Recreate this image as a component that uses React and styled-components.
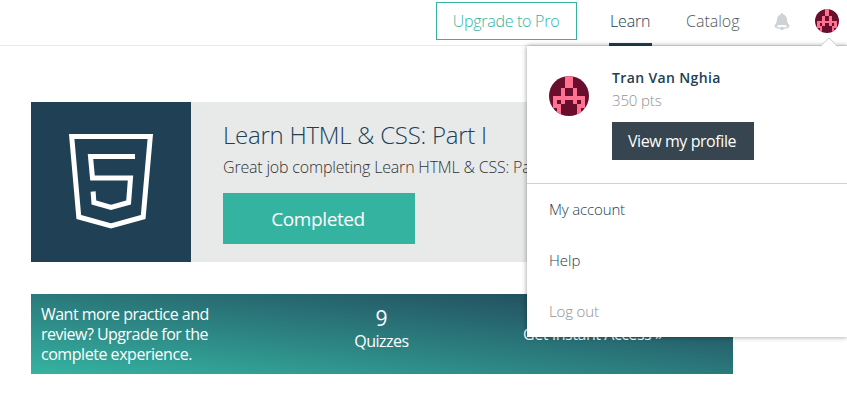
import React from "react";
import styled, { createGlobalStyle } from "styled-components";

const Global = createGlobalStyle`
  * { box-sizing: border-box; }
  body { margin: 0; background: #fff; overflow: hidden; font-family: "Open Sans", "Noto Sans", sans-serif; font-weight: 300; color: #204056; }
`;
const Page = styled.div`position: relative; width: 847px; height: 407px; overflow: hidden; background: #fff;`;
const Header = styled.header`display: flex; align-items: flex-start; height: 46px; padding-left: 436px; border-bottom: 1px solid #e8eaea;`;
const Upgrade = styled.button`width: 141px; height: 38px; margin-top: 2px; padding: 0 1px 0 0; border: 1px solid #35b3a1; background: #fff; color: #35b3a1; font: inherit; font-size: 16px; letter-spacing: -0.27px; white-space: nowrap;`;
const NavLink = styled.a`height: 46px; padding: 0 1px; line-height: 43px; font-size: 16px; white-space: nowrap; color: ${p => p.$active ? "#204056" : "#4f5b63"}; border-bottom: 3px solid ${p => p.$active ? "#204056" : "transparent"}; width: ${p => p.$width}px; margin-left: ${p => p.$gap}px; letter-spacing: ${p => p.$track || 0}px;`;
const Bell = styled.svg`width: 16px; height: 17px; margin: 13px 0 0 32px;`;
const AvatarSvg = styled.svg`display: block; flex: none; width: ${p => p.$size}px; height: ${p => p.$size}px; border-radius: 50%;`;
const HeaderAvatar = styled.div`margin: 9px 0 0 25px;`;

const Main = styled.main`width: 702px; margin: 56px 0 0 31px;`;
const Course = styled.section`display: flex; height: 160px; background: #e8eaea;`;
const Badge = styled.div`width: 160px; height: 160px; background: #204056; flex: none;`;
const CourseBody = styled.div`padding: 16px 0 0 32px; white-space: nowrap;`;
const Title = styled.h1`margin: 0; font-size: 24px; line-height: 34px; font-weight: 300; letter-spacing: -0.25px;`;
const Desc = styled.p`margin: 0; font-size: 16px; line-height: 30px; color: #333; letter-spacing: -0.19px;`;
const Completed = styled.button`display: block; width: 192px; height: 51px; margin-top: 11px; padding: 0 2px 0 0; border: 0; background: #35b3a1; color: #fff; font: 400 19px "Open Sans", sans-serif; letter-spacing: -0.4px;`;
const Promo = styled.section`display: flex; height: 80px; margin-top: 32px; color: #fff; font-weight: 400; font-size: 16px; line-height: 20px; background: linear-gradient(to top right, #35b3a1, #204056);`;
const Pitch = styled.div`width: 234px; padding: 10px 0 0 10px; white-space: nowrap;`;
const Line = styled.div`letter-spacing: ${p => p.$track || 0}px;`;
const Stat = styled.div`width: 233px; padding-top: 13px; text-align: center;`;
const Count = styled.div`font-size: 21px; line-height: 23px; margin-bottom: 1px;`;
const Access = styled.div`width: 235px; padding-top: 30px; padding-left: 25px; white-space: nowrap; letter-spacing: -0.45px;`;

const Menu = styled.aside`position: absolute; left: 527px; top: 46px; width: 320px; height: 291px; background: #fff; box-shadow: 0 0 5px rgba(0,0,0,.42);`;
const Arrow = styled.svg`position: absolute; left: 293px; top: -9px; width: 18px; height: 10px;`;
const Profile = styled.div`display: flex; align-items: flex-start; height: 138px; padding: 30px 0 0 22px; border-bottom: 1px solid #cfd2d2;`;
const Info = styled.div`margin: -10px 0 0 23px; white-space: nowrap;`;
const Name = styled.div`font-size: 14px; line-height: 24px; font-weight: 600; letter-spacing: 0.36px;`;
const Points = styled.div`font-size: 15px; line-height: 20px; color: #8e9193; letter-spacing: -0.15px;`;
const ViewButton = styled.button`display: block; width: 142px; height: 38px; margin-top: 12px; padding: 0 2px 0 0; border: 0; background: #36454f; color: #fff; font: 400 16px "Open Sans", sans-serif; letter-spacing: -0.42px;`;
const Item = styled.a`display: block; height: 51px; padding-left: 22px; line-height: 51px; font-size: 15px; color: ${p => p.$muted ? "#8e9193" : "#204056"}; letter-spacing: ${p => p.$track || 0}px;`;

const avatarRows = [
  "0000110000",
  "0000110000",
  "0000110000",
  "0001001000",
  "0001001000",
  "0111111110",
  "0101001010",
  "0110000110",
  "0010000100",
  "0010000100",
];
const Avatar = ({ size }) => (
  <AvatarSvg $size={size} viewBox="0 0 10 10">
    <rect width="10" height="10" fill="#690e2d" />
    {avatarRows.flatMap((r, y) => [...r].map((c, x) => c === "1" && <rect key={x + "-" + y} x={x} y={y} width="1" height="1" fill="#ff7190" shapeRendering="crispEdges" />))}
  </AvatarSvg>
);

export default function App() {
  return (
    <Page>
      <Global />
      <Header>
        <Upgrade>Upgrade to Pro</Upgrade>
        <NavLink $active $width={43} $gap={32} $track={-0.15}>Learn</NavLink>
        <NavLink $width={57} $gap={33}>Catalog</NavLink>
        <Bell viewBox="0 0 16 17">
          <path d="M8 .3c-1 0-1.300.6-1.400 1.200C4.300 2.200 3.200 4 3 6.500 2.800 9.200 2 10.600 1 11.700c-1.200 1.500-.4 3.200 2.600 3.900.8.200 1.700.3 2.600.3.300.8 1 1.100 1.800 1.100s1.500-.3 1.800-1.100c.9 0 1.800-.1 2.600-.3 3-.7 3.800-2.400 2.600-3.900-1-1.100-1.800-2.500-2-5.200-.2-2.500-1.300-4.300-3.600-5C9.300.9 9 .3 8 .3z" fill="#cfd2d4" />
          <path d="M2.500 13.300C4 11.700 12 11.700 13.500 13.300 12.500 14.200 11 14.600 9.700 14.700 9.500 13.500 6.500 13.500 6.300 14.700 5 14.600 3.500 14.200 2.500 13.300Z" fill="#fff" />
        </Bell>
        <HeaderAvatar><Avatar size={24} /></HeaderAvatar>
      </Header>
      <Main>
        <Course>
          <Badge>
            <svg width="160" height="160" viewBox="0 0 160 160" fill="none" stroke="#fff" strokeWidth="5">
              <path d="M40.700 34.500H119.300L112.200 115 80 124 47.800 115Z" />
              <path d="M104 54.500H59.500L61.500 76H99.500L97.600 100.500 80 105.500 62.900 100.500 62.100 89.500" />
            </svg>
          </Badge>
          <CourseBody>
            <Title>Learn HTML &amp; CSS: Part I</Title>
            <Desc>Great job completing Learn HTML &amp; CSS: Part I</Desc>
            <Completed>Completed</Completed>
          </CourseBody>
        </Course>
        <Promo>
          <Pitch>
            <Line $track={-0.53}>Want more practice and</Line>
            <Line $track={-0.51}>review? Upgrade for the</Line>
            <Line $track={-0.46}>complete experience.</Line>
          </Pitch>
          <Stat><Count>9</Count><Line $track={-0.5}>Quizzes</Line></Stat>
          <Access>Get Instant Access »</Access>
        </Promo>
      </Main>
      <Menu>
        <Arrow viewBox="0 0 18 10">
          <path d="M0 10 9 1 18 10Z" fill="#fff" />
          <path d="M0 9.500 9 1 18 9.500" fill="none" stroke="#ccc" />
        </Arrow>
        <Profile>
          <Avatar size={40} />
          <Info><Name>Tran Van Nghia</Name><Points>350 pts</Points><ViewButton>View my profile</ViewButton></Info>
        </Profile>
        <Item $track={-0.15}>My account</Item>
        <Item>Help</Item>
        <Item $muted $track={-0.15}>Log out</Item>
      </Menu>
    </Page>
  );
}
